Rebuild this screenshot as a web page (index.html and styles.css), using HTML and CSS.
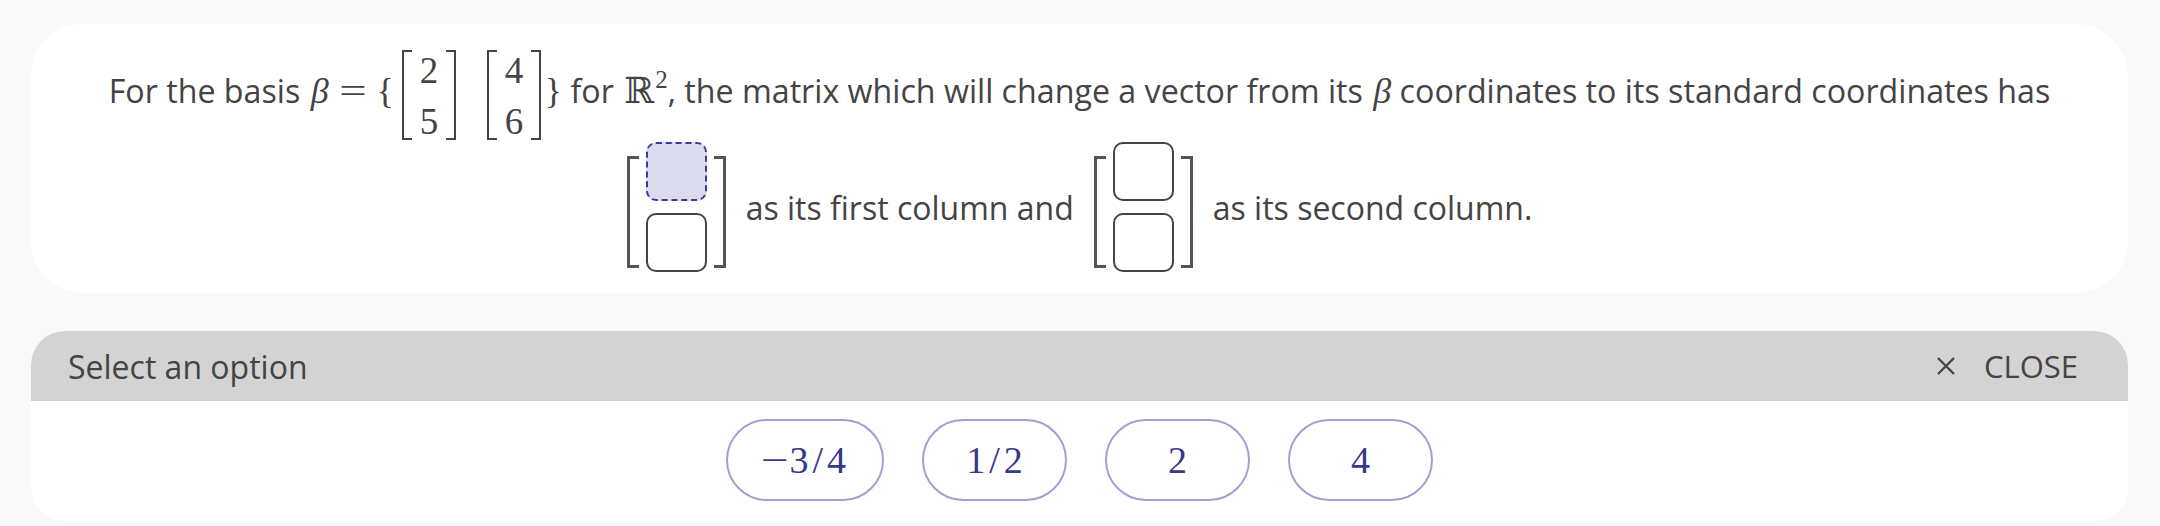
FILE: index.html
```html
<!DOCTYPE html>
<html lang="en">
<head>
<meta charset="utf-8">
<title>Change of basis</title>
<link rel="stylesheet" href="styles.css">
</head>
<body>
<main class="page">
  <section class="card">
    <p class="line1">For the basis <span class="math"><span class="mi">β</span><span class="mo">=</span><span class="brace open">{</span><span class="vec"><span class="vb left"></span><span class="vcol"><span class="vn">2</span><span class="vn">5</span></span><span class="vb right"></span></span><span class="vsp"></span><span class="vec"><span class="vb left"></span><span class="vcol"><span class="vn">4</span><span class="vn">6</span></span><span class="vb right"></span></span><span class="brace close-b">}</span></span> for <span class="math bb">ℝ<sup class="sup">2</sup></span>, the matrix which will change a vector from its <span class="math"><span class="mi">β</span></span> coordinates to its standard coordinates has</p>
    <div class="line2">
      <div class="matrix">
        <span class="mb left"></span>
        <div class="cells"><span class="cell active"></span><span class="cell"></span></div>
        <span class="mb right"></span>
      </div>
      <span class="txt">as its first column and</span>
      <div class="matrix">
        <span class="mb left"></span>
        <div class="cells"><span class="cell"></span><span class="cell"></span></div>
        <span class="mb right"></span>
      </div>
      <span class="txt">as its second column.</span>
    </div>
  </section>

  <section class="panel">
    <header class="panel-head">
      <span class="panel-title">Select an option</span>
      <button class="close" type="button"><svg class="close-icon" viewBox="0 0 20 20" width="20" height="20" aria-hidden="true"><path d="M2 2 L18 18 M18 2 L2 18" stroke="#444" stroke-width="2.4" fill="none"/></svg><span>CLOSE</span></button>
    </header>
    <div class="options">
      <button class="opt" type="button"><span class="minus">−</span>3<span class="slash">/</span>4</button>
      <button class="opt" type="button">1<span class="slash">/</span>2</button>
      <button class="opt" type="button">2</button>
      <button class="opt" type="button">4</button>
    </div>
  </section>
</main>
</body>
</html>
```

FILE: styles.css
```css
html, body {
  margin: 0;
  padding: 0;
  background: #f9f9f9;
}

body {
  font-family: "Open Sans", "Noto Sans", sans-serif;
  color: #444;
}

.page {
  padding: 24px 32px 0 31px;
}

.card {
  background: #fff;
  border-radius: 52px;
  padding: 26px 40px 21px;
}

.line1 {
  margin: 0;
  font-size: 32.2px;
  line-height: normal;
  text-align: center;
  white-space: nowrap;
}

.math {
  font-family: "Liberation Serif", "DejaVu Serif", serif;
  font-size: 36px;
  color: #444;
}

.mi {
  font-style: italic;
  margin-left: 2px;
}

.mo {
  display: inline-block;
  width: 28px;
  margin: 0 10px;
  text-align: center;
  transform: scaleX(1.35);
}

.brace {
  display: inline-block;
}

.brace.open {
  margin-right: 8px;
}

.brace.close-b {
  margin-left: 4px;
}

.bb {
  margin-left: 2px;
}

.sup {
  font-size: 25px;
  vertical-align: 15px;
  line-height: 0;
  margin-left: 1px;
}

.vec {
  display: inline-flex;
  vertical-align: middle;
  height: 90px;
  align-items: stretch;
}

.vsp {
  display: inline-block;
  width: 31px;
}

.vb {
  width: 10px;
  box-sizing: border-box;
  border: 2px solid #444;
}

.vb.left {
  border-right: none;
}

.vb.right {
  border-left: none;
}

.vcol {
  display: flex;
  flex-direction: column;
  justify-content: space-between;
  padding: 3px 8px 0;
  width: 18px;
  font-size: 37px;
  line-height: 36px;
  text-align: center;
}

.line2 {
  margin-top: 2px;
  display: flex;
  justify-content: center;
  align-items: center;
  gap: 20px;
  height: 130px;
  font-size: 32px;
  line-height: normal;
}

.matrix {
  display: flex;
  align-items: center;
  gap: 7px;
}

.mb {
  width: 12px;
  height: 112px;
  margin-top: 10px;
  box-sizing: border-box;
  border: 3px solid #555;
}

.mb.left {
  border-right: none;
}

.mb.right {
  border-left: none;
}

.cells {
  display: flex;
  flex-direction: column;
  gap: 12px;
}

.cell {
  display: block;
  width: 61px;
  height: 59px;
  box-sizing: border-box;
  border: 2px solid #444;
  border-radius: 10px;
  background: #fff;
}

.cell.active {
  border: 2px dashed #3a3a9e;
  background: #dcdcee;
}

.panel {
  margin-top: 38px;
  background: #fff;
  border-radius: 34px;
  overflow: hidden;
}

.panel-head {
  height: 70px;
  background: #d3d3d3;
  display: flex;
  align-items: center;
  justify-content: space-between;
  padding: 0 50px 0 37px;
  font-size: 32px;
}

.panel-title {
  line-height: normal;
}

.close {
  display: flex;
  align-items: center;
  gap: 28px;
  border: none;
  background: none;
  padding: 0;
  font-family: "Open Sans", "Noto Sans", sans-serif;
  font-size: 31px;
  color: #444;
  cursor: pointer;
}

.close-icon {
  display: block;
}

.options {
  display: flex;
  justify-content: center;
  gap: 38px;
  padding: 18px 0 20px;
}

.opt {
  height: 82px;
  min-width: 145px;
  padding: 0 36px;
  box-sizing: border-box;
  border: 2px solid #a0a0d2;
  border-radius: 41px;
  background: #fff;
  font-family: "Liberation Serif", "DejaVu Serif", serif;
  font-size: 38px;
  color: #38388c;
  cursor: pointer;
}

.minus {
  display: inline-block;
  margin-right: 4px;
  transform: scaleX(1.3);
}

.slash {
  display: inline-block;
  margin: 0 4px;
}
```
